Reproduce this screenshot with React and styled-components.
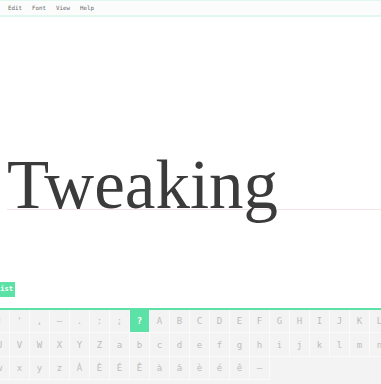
import styled, { createGlobalStyle } from 'styled-components';

const Global = createGlobalStyle`
    html, body { margin:0; padding:0; background:#fff; overflow:hidden; }
    body { width:381px; height:384px; }
`;

const Page = styled.div`
    display:flex;
    flex-direction:column;
    width:381px;
    height:384px;
    overflow:hidden;
`;

const MenuBar = styled.div`
    display:flex;
    align-items:center;
    height:14px;
    padding-left:8px;
    background:#fcfcfc;
    border-top:1px solid #e2f7ee;
    border-bottom:2px solid #e2f7ee;
`;

const MenuItem = styled.span`
    width:24px;
    font-family:"DejaVu Sans Mono", monospace;
    font-size:5.8px;
    color:#666;
`;

const Canvas = styled.div`
    flex:1;
    display:flex;
    flex-direction:column;
`;

const Sample = styled.div`
    margin:134px 0 0 7px;
    height:58px;
    border-bottom:1px solid #f6e3e6;
    font-family:"Liberation Serif", serif;
    font-size:69px;
    line-height:69px;
    color:#3b3b3b;
    white-space:nowrap;
`;

const ButtonRow = styled.div`
    display:flex;
    margin-top:72px;
`;

const ListButton = styled.div`
    margin-left:-6px;
    padding:0 2px;
    height:15px;
    display:flex;
    align-items:center;
    background:#5ce2a6;
    color:#fff;
    font-family:"DejaVu Sans Mono", monospace;
    font-weight:bold;
    font-size:7px;
`;

const Keyboard = styled.div`
    margin-top:11px;
    height:75px;
    border-top:2px solid #5ce2a6;
    background:#f3f3f3;
`;

const Grid = styled.div`
    margin-left:-10px;
    display:grid;
    grid-template-columns:repeat(28, 20px);
    grid-auto-rows:23.5px;
    width:560px;
`;

const Cell = styled.div`
    box-sizing:border-box;
    display:flex;
    align-items:center;
    justify-content:center;
    border-right:1px solid #fbfbfb;
    border-bottom:1px solid #fbfbfb;
    background:${p => (p.$active ? '#5ce2a6' : '#f3f3f3')};
    color:${p => (p.$active ? '#fff' : '#bdbdbd')};
    font-weight:${p => (p.$active ? 'bold' : 'normal')};
    font-family:"DejaVu Sans Mono", monospace;
    font-size:9px;
`;

const rows = [
    ['!', "'", ',', '–', '.', ':', ';', '?', ...'ABCDEFGHIJKLMNOPQRST'.split('')],
    [...'UVWXYZabcdefghijklmnopqrstuv'.split('')],
    ['w', 'x', 'y', 'z', 'À', 'È', 'É', 'Ê', 'à', 'â', 'è', 'é', 'ê', '–'],
];

export default function App() {
    return <Page>
        <Global />
        <MenuBar>
            {['Edit', 'Font', 'View', 'Help'].map(m => <MenuItem key={m}>{m}</MenuItem>)}
        </MenuBar>
        <Canvas>
            <Sample>Tweaking</Sample>
            <ButtonRow><ListButton>list</ListButton></ButtonRow>
        </Canvas>
        <Keyboard>
            <Grid>
                {rows.flat().map((c, i) => <Cell key={i} $active={c === '?'}>{c}</Cell>)}
            </Grid>
        </Keyboard>
    </Page>
}
